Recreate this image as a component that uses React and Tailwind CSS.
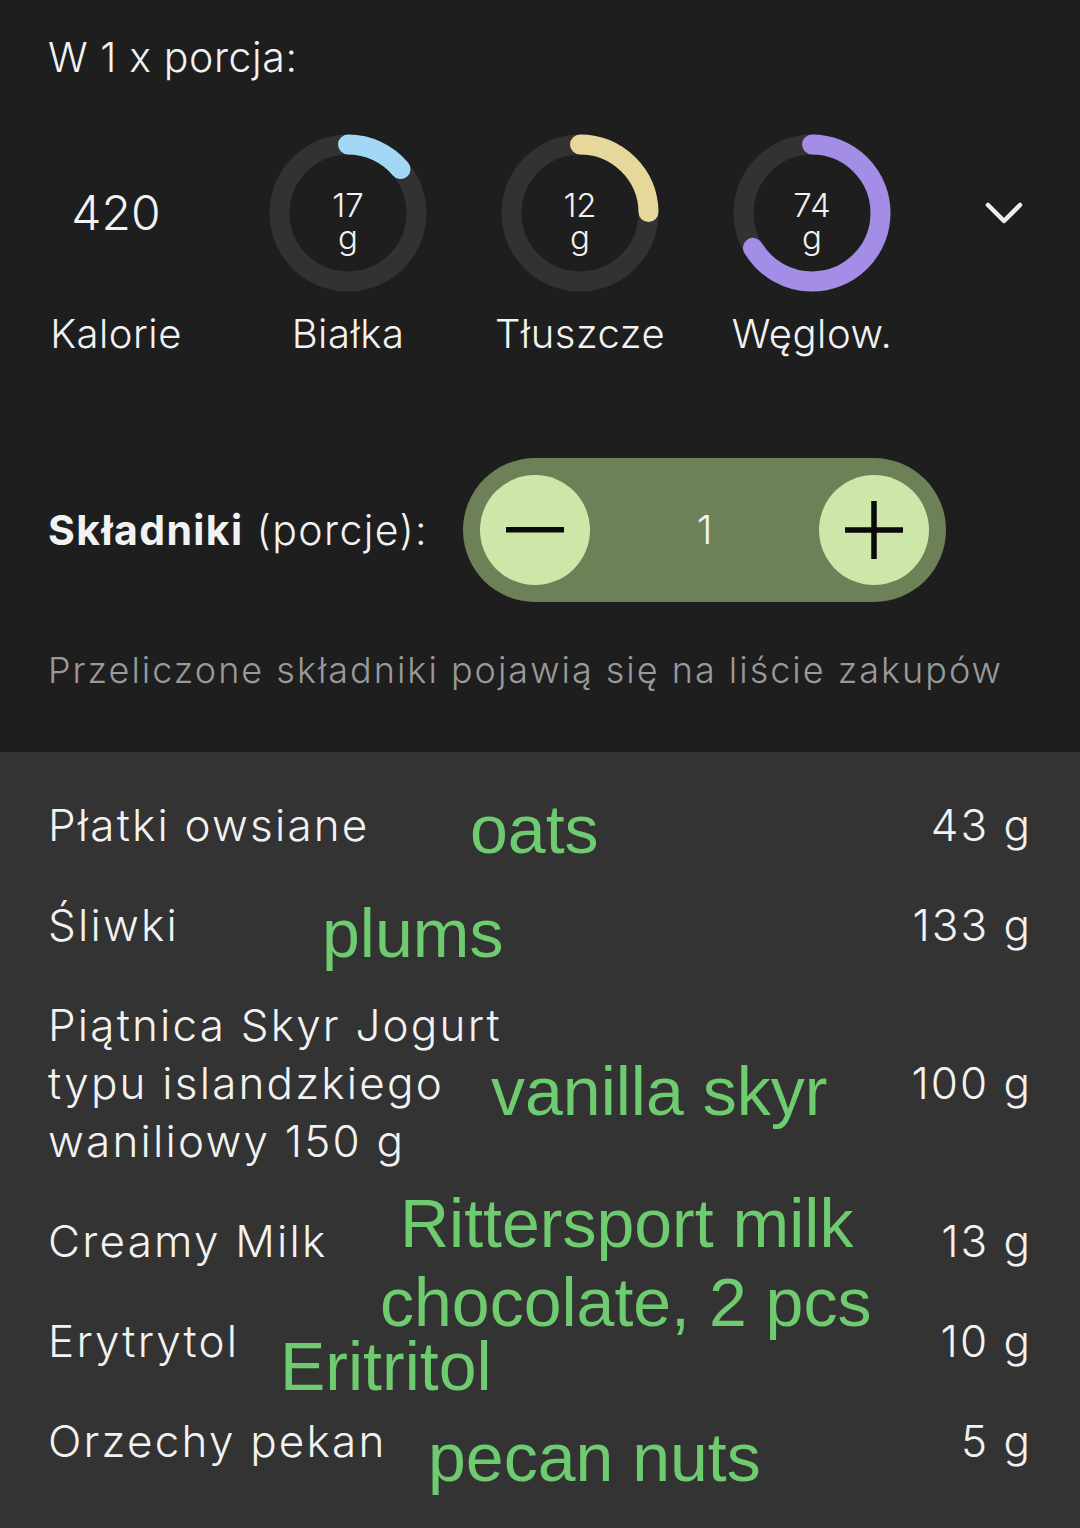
const macros = [
  { value: 17, label: 'Białka', color: '#a3d8f4', deg: 50 },
  { value: 12, label: 'Tłuszcze', color: '#e6d79b', deg: 89 },
  { value: 74, label: 'Węglow.', color: '#a48de6', deg: 239 },
];

const ingredients = [
  { name: ['Płatki owsiane'], amount: '43 g' },
  { name: ['Śliwki'], amount: '133 g' },
  { name: ['Piątnica Skyr Jogurt', 'typu islandzkiego', 'waniliowy 150 g'], amount: '100 g' },
  { name: ['Creamy Milk'], amount: '13 g' },
  { name: ['Erytrytol'], amount: '10 g' },
  { name: ['Orzechy pekan'], amount: '5 g' },
];

// hand-written notes lying over the list
const notes = [
  { text: 'oats', cls: 'left-[470px] top-[795px]' },
  { text: 'plums', cls: 'left-[322px] top-[899px]' },
  { text: 'vanilla skyr', cls: 'left-[491px] top-[1057px]' },
  { text: 'Rittersport milk', cls: 'left-[400px] top-[1189px]' },
  { text: 'chocolate, 2 pcs', cls: 'left-[380px] top-[1268px]' },
  { text: 'Eritritol', cls: 'left-[280px] top-[1332px]' },
  { text: 'pecan nuts', cls: 'left-[428px] top-[1423px]' },
];

function Ring({ value, color, deg }) {
  const r = 68.5;
  const circ = 2 * Math.PI * r;
  const len = (circ * deg) / 360;
  return (
    <div className="relative w-[158px] h-[158px]">
      <svg width="158" height="158" viewBox="0 0 158 158" className="-rotate-90">
        <circle cx="79" cy="79" r={r} fill="none" stroke="#323232" strokeWidth="20" />
        <circle
          cx="79"
          cy="79"
          r={r}
          fill="none"
          stroke={color}
          strokeWidth="20"
          strokeLinecap="round"
          strokeDasharray={`${len} ${circ}`}
        />
      </svg>
      <div className="absolute inset-0 flex flex-col items-center justify-center pt-[15px] text-[33px] leading-[32px] font-light text-[#f2f2f2]">
        <span>{value}</span>
        <span>g</span>
      </div>
    </div>
  );
}

export default function App() {
  return (
    <div className="relative w-[1080px] h-[1528px] flex flex-col bg-[#1e1e1e] font-['Inter',sans-serif] text-[#f2f2f2] overflow-hidden">
      {/* top: nutrition per portion */}
      <div className="pl-[48px] pt-[32px] pb-[57px]">
        <div className="text-[41px] leading-[50px] font-light tracking-[0.6px]">W 1 x porcja:</div>

        <div className="-ml-[48px] mt-[52px] grid grid-cols-[232px_232px_232px_232px_1fr]">
          <div className="h-[158px] flex items-center justify-center text-[48px] leading-[50px] font-light">420</div>
          {macros.map((m) => (
            <div key={m.label} className="flex justify-center">
              <Ring {...m} />
            </div>
          ))}
          <div className="flex items-center justify-center">
            <svg width="38" height="23" viewBox="0 0 38 23" fill="none" stroke="#eeeeee" strokeWidth="4.5" strokeLinecap="round" strokeLinejoin="round">
              <path d="M3 3 L19 19 L35 3" />
            </svg>
          </div>

          <div className="mt-[17px] text-center text-[40px] leading-[50px] font-light tracking-[0.5px]">Kalorie</div>
          {macros.map((m) => (
            <div key={m.label} className="mt-[17px] text-center text-[40px] leading-[50px] font-light tracking-[0.5px]">
              {m.label}
            </div>
          ))}
          <div />
        </div>

        <div className="mt-[99px] flex items-center gap-[35px]">
          <div className="text-[41px] leading-[50px] tracking-[1.4px]">
            <span className="font-bold">Składniki</span> <span className="font-light">(porcje):</span>
          </div>
          <div className="w-[483px] h-[144px] rounded-full bg-[#6e8058] flex items-center justify-between px-[17px]">
            <button className="w-[110px] h-[110px] rounded-full bg-[#cce7a8] flex items-center justify-center">
              <svg width="58" height="6" viewBox="0 0 58 6">
                <rect x="0" y="0" width="58" height="5.5" fill="#0a0a0a" />
              </svg>
            </button>
            <span className="text-[40px] leading-[50px] font-light text-[#f4f4f4]">1</span>
            <button className="w-[110px] h-[110px] rounded-full bg-[#cce7a8] flex items-center justify-center">
              <svg width="58" height="58" viewBox="0 0 58 58">
                <rect x="0" y="26.25" width="58" height="5.5" fill="#0a0a0a" />
                <rect x="26.25" y="0" width="5.5" height="58" fill="#0a0a0a" />
              </svg>
            </button>
          </div>
        </div>

        <p className="mt-[43px] text-[36px] leading-[50px] font-light tracking-[2px] text-[#9a9a9a]">
          Przeliczone składniki pojawią się na liście zakupów
        </p>
      </div>

      {/* bottom: ingredient list */}
      <div className="flex-1 bg-[#333333] pt-[23px] px-[48px]">
        {ingredients.map((it) => (
          <div key={it.amount + it.name[0]} className="flex items-center justify-between py-[21px]">
            <div className="text-[44px] leading-[58px] font-light tracking-[2.2px]">
              {it.name.map((line) => (
                <div key={line}>{line}</div>
              ))}
            </div>
            <div className="text-[44px] leading-[58px] font-light tracking-[2px]">{it.amount}</div>
          </div>
        ))}
      </div>

      {notes.map((n) => (
        <span
          key={n.text}
          className={`absolute ${n.cls} whitespace-nowrap font-['Liberation_Sans',Arial,sans-serif] text-[68px] leading-[68px] text-[#6fcb6f]`}
        >
          {n.text}
        </span>
      ))}
    </div>
  );
}
